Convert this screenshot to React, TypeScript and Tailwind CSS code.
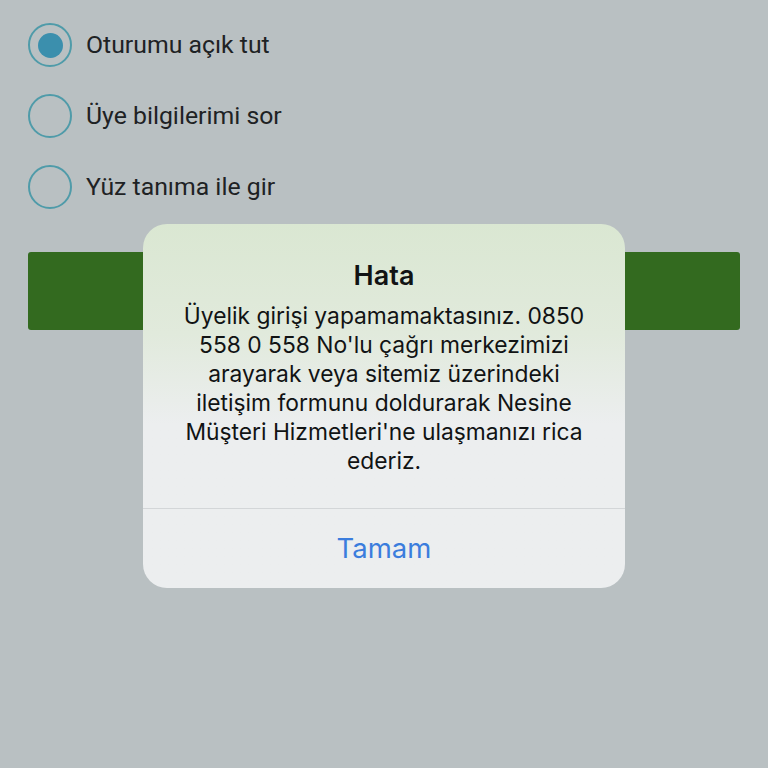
const OPTIONS = [
  { label: "Oturumu açık tut", checked: true },
  { label: "Üye bilgilerimi sor", checked: false },
  { label: "Yüz tanıma ile gir", checked: false },
];

const MESSAGE = [
  "Üyelik girişi yapamamaktasınız. 0850",
  "558 0 558 No'lu çağrı merkezimizi",
  "arayarak veya sitemiz üzerindeki",
  "iletişim formunu doldurarak Nesine",
  "Müşteri Hizmetleri'ne ulaşmanızı rica",
  "ederiz.",
];

function Radio({ checked }: { checked: boolean }) {
  return (
    <span className="flex h-[44px] w-[44px] shrink-0 items-center justify-center rounded-full border-2 border-[#4f9ba9]">
      {checked && <span className="h-[25px] w-[25px] rounded-full bg-[#3b8fad]" />}
    </span>
  );
}

export default function App() {
  return (
    <div
      className="relative h-[768px] w-[768px] overflow-hidden bg-[#b9c0c2]"
      style={{ fontFamily: "Roboto, 'Noto Sans', sans-serif" }}
    >
      <div className="flex flex-col gap-[27px] px-[28px] pt-[23px]">
        {OPTIONS.map((o) => (
          <div key={o.label} className="flex items-center gap-[14px]">
            <Radio checked={o.checked} />
            <span className="text-[24.8px] leading-[44px] text-[#1e2224]">{o.label}</span>
          </div>
        ))}
      </div>

      <div className="mx-[28px] mt-[43px] h-[78px] rounded-[3px] bg-[#336a1f]" />

      {/* alert */}
      <div
        className="absolute left-[143px] top-[224px] flex w-[482px] flex-col overflow-hidden rounded-[24px] bg-gradient-to-b from-[#dae7d2] via-[#e1eadc] via-30% to-[#eceeef] to-55%"
        style={{ fontFamily: "Inter, 'Liberation Sans', sans-serif" }}
      >
        <div className="flex flex-col items-center px-[20px] pb-[33px] pt-[36px] text-center text-[#111314]">
          <h2 className="text-[27px] font-semibold leading-[32px]">Hata</h2>
          <p className="mt-[9px] text-[22.8px] leading-[29px]">
            {MESSAGE.map((line) => (
              <span key={line} className="block whitespace-nowrap">
                {line}
              </span>
            ))}
          </p>
        </div>
        <div className="h-px bg-[#d3d6d8]" />
        <button className="h-[79px] text-[27.5px] text-[#3b7ddd]">Tamam</button>
      </div>
    </div>
  );
}
